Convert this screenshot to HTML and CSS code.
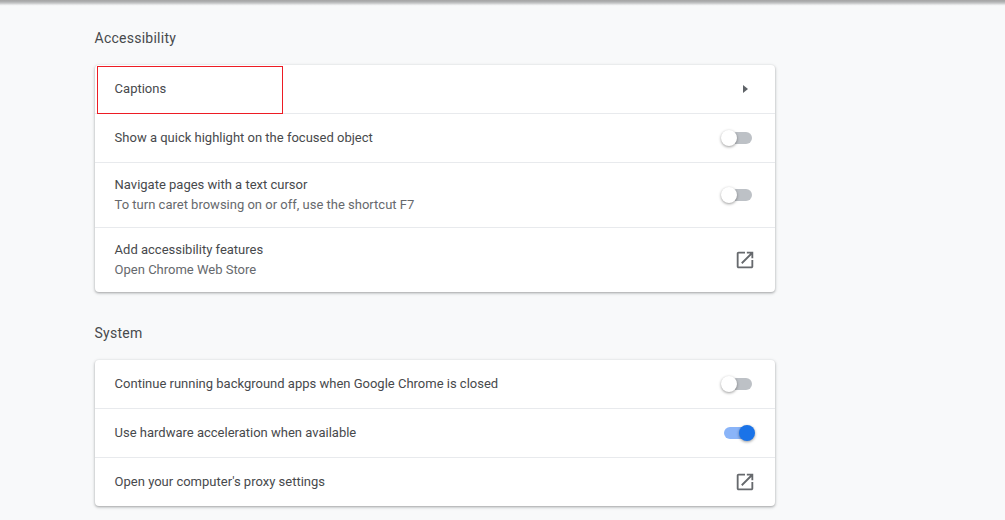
FILE: index.html
```html
<!DOCTYPE html>
<html lang="en">
<head>
<meta charset="utf-8">
<title>Settings</title>
<link rel="stylesheet" href="styles.css">
</head>
<body>
<div class="topbar"></div>
<main class="page">
  <h2 class="section-title">Accessibility</h2>
  <section class="card">
    <div class="row row-single">
      <span class="label">Captions</span>
      <svg class="arrow" viewBox="0 0 5 8"><path d="M0 0l5 4-5 4z"/></svg>
      <div class="highlight"></div>
    </div>
    <div class="row row-single">
      <span class="label">Show a quick highlight on the focused object</span>
      <span class="toggle"><span class="track"></span><span class="knob"></span></span>
    </div>
    <div class="row row-double">
      <div class="text"><span class="label">Navigate pages with a text cursor</span><span class="sub">To turn caret browsing on or off, use the shortcut F7</span></div>
      <span class="toggle"><span class="track"></span><span class="knob"></span></span>
    </div>
    <div class="row row-double">
      <div class="text"><span class="label">Add accessibility features</span><span class="sub">Open Chrome Web Store</span></div>
      <svg class="open" viewBox="0 0 24 24"><path d="M19 19H5V5h7V3H5c-1.11 0-2 .9-2 2v14c0 1.1.89 2 2 2h14c1.1 0 2-.9 2-2v-7h-2v7zM14 3v2h3.59l-9.83 9.83 1.41 1.41L19 6.41V10h2V3h-7z"/></svg>
    </div>
  </section>
  <h2 class="section-title section-next">System</h2>
  <section class="card">
    <div class="row row-single">
      <span class="label">Continue running background apps when Google Chrome is closed</span>
      <span class="toggle"><span class="track"></span><span class="knob"></span></span>
    </div>
    <div class="row row-single">
      <span class="label">Use hardware acceleration when available</span>
      <span class="toggle on"><span class="track"></span><span class="knob"></span></span>
    </div>
    <div class="row row-single">
      <span class="label">Open your computer's proxy settings</span>
      <svg class="open" viewBox="0 0 24 24"><path d="M19 19H5V5h7V3H5c-1.11 0-2 .9-2 2v14c0 1.1.89 2 2 2h14c1.1 0 2-.9 2-2v-7h-2v7zM14 3v2h3.59l-9.83 9.83 1.41 1.41L19 6.41V10h2V3h-7z"/></svg>
    </div>
  </section>
</main>
</body>
</html>
```
FILE: styles.css
```css
* { box-sizing: border-box; }
html, body { margin: 0; height: 520px; overflow: hidden; }
body {
  background: #f8f9fa;
  font-family: Roboto, "Liberation Sans", sans-serif;
  font-size: 13px;
  color: #47494c;
  position: relative;
}
.topbar {
  height: 6px;
  background: linear-gradient(#a4a4a4, #b0b1b2 30%, #cfd0d1 60%, #f0f1f2 85%, #f8f9fa);
}
.page { width: 680px; margin-left: 95px; }
.section-title {
  margin: 0;
  height: 59px;
  padding-top: 24px;
  font-size: 14px;
  line-height: 16px;
  font-weight: 400;
  letter-spacing: .25px;
  color: #47494c;
  margin-left: -.5px;
}
.section-next { height: 68px; padding-top: 33px; }
.card {
  background: #fff;
  border-radius: 4px;
  box-shadow: 0 1px 2px rgba(60,64,67,.3), 0 1px 3px 1px rgba(60,64,67,.15);
}
.row {
  position: relative;
  display: flex;
  align-items: center;
  justify-content: space-between;
  padding: 0 20px 0 19.6px;
  border-top: 1px solid #e8eaed;
}
.row:first-child { border-top: 0; }
.row-single { height: 49px; }
.row-single:first-child { height: 48px; }
.row-double { height: 65px; }
.text { display: flex; flex-direction: column; gap: 4px; }
.label { line-height: 16px; }
.sub { line-height: 16px; color: #66696d; }
.arrow { width: 5px; height: 8px; margin-right: 7px; fill: #5f6368; }
.open { width: 22px; height: 22px; margin-right: -1px; fill: #66696d; }
.highlight {
  position: absolute;
  z-index: 1;
  left: 2px;
  top: 1px;
  width: 186px;
  height: 48px;
  border: 1px solid #ed1c24;
}
.toggle { position: relative; width: 34px; height: 16px; display: block; }
.track {
  position: absolute;
  left: 3px;
  top: 2px;
  width: 28px;
  height: 12px;
  border-radius: 6px;
  background: #bdc1c6;
}
.knob {
  position: absolute;
  left: 0;
  top: 0;
  width: 16px;
  height: 16px;
  border-radius: 50%;
  background: #fff;
  box-shadow: 0 1px 3px rgba(0,0,0,.4);
}
.toggle.on .track { background: #8ab4f8; }
.toggle.on .knob { left: 18px; background: #1a73e8; }
```
